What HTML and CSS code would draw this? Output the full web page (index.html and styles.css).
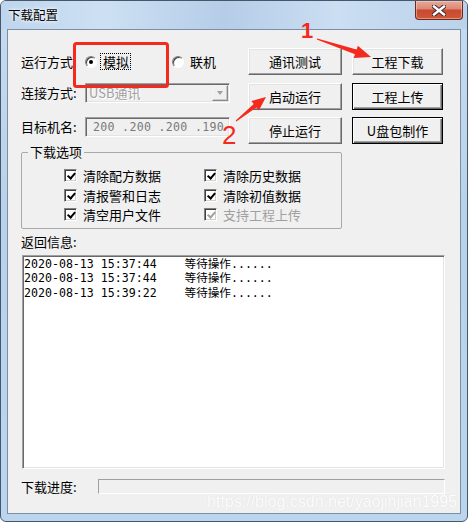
FILE: index.html
```html
<!DOCTYPE html>
<html>
<head>
    <meta charset="utf-8">
    <title>下载配置</title>
    <link rel="stylesheet" href="styles.css">
</head>
<body>
    <div class="window">
        <div class="titlebar">
            <span class="title">下载配置</span>
            <div class="close-btn">
                <svg width="14" height="11" viewBox="0 0 14 11">
                    <path d="M2 1.5 L12 9.5 M12 1.5 L2 9.5" stroke="#3b2a2a" stroke-width="4.4" stroke-linecap="square"/>
                    <path d="M2 1.5 L12 9.5 M12 1.5 L2 9.5" stroke="#fff" stroke-width="2.4" stroke-linecap="square"/>
                </svg>
            </div>
        </div>

        <div class="client">
            <div class="top">
                <div class="form">
                    <label class="lbl mid">运行方式:</label>
                    <div class="radios">
                        <span class="radio checked"></span>
                        <span class="focus">模拟</span>
                        <span class="radio second"></span>
                        <span class="radio-text">联机</span>
                    </div>

                    <label class="lbl">连接方式:</label>
                    <div class="combo">
                        <span>USB通讯</span>
                        <span class="drop"><i></i></span>
                    </div>

                    <label class="lbl">目标机名:</label>
                    <div class="ipbox">200 .200 .200 .190</div>
                </div>

                <div class="btns">
                    <button>通讯测试</button>
                    <button>工程下载</button>
                    <button>启动运行</button>
                    <button class="default">工程上传</button>
                    <button>停止运行</button>
                    <button class="default">U盘包制作</button>
                </div>
            </div>

            <fieldset class="options">
                <legend>下载选项</legend>
                <div class="checks">
                    <div class="check"><span class="box"></span>清除配方数据</div>
                    <div class="check"><span class="box"></span>清除历史数据</div>
                    <div class="check"><span class="box"></span>清报警和日志</div>
                    <div class="check"><span class="box"></span>清除初值数据</div>
                    <div class="check"><span class="box"></span>清空用户文件</div>
                    <div class="check disabled"><span class="box"></span>支持工程上传</div>
                </div>
            </fieldset>

            <div class="log-title">返回信息:</div>
            <div class="log">
                <div class="log-line">2020-08-13 15:37:44    等待操作......</div>
                <div class="log-line">2020-08-13 15:37:44    等待操作......</div>
                <div class="log-line">2020-08-13 15:39:22    等待操作......</div>
            </div>

            <div class="progress-row">
                <span class="progress-label">下载进度:</span>
                <div class="progress"></div>
            </div>

            <div class="watermark">https://blog.csdn.net/yaojinjian1995</div>
        </div>
    </div>

    <!-- red annotations drawn over the dialog -->
    <svg class="marks" width="468" height="522" viewBox="0 0 468 522">
        <rect x="74.5" y="43.5" width="93" height="43" rx="2" fill="none" stroke="#f42a1e" stroke-width="3"/>
        <text x="301" y="38" class="num one">1</text>
        <polygon points="317.2,38.5 356.6,49.5 357.9,45.7 371,57 353.7,58.1 355,54.3 316.8,39.5"/>
        <text x="222" y="144" class="num two">2</text>
        <polygon points="235.7,120.6 253.7,104.1 251.4,101.1 266,97 258.9,110.5 256.5,107.5 236.3,121.4"/>
    </svg>
</body>
</html>
```

FILE: styles.css
```css
body {
    margin: 0;
    position: relative;
    font-family: "Noto Sans CJK SC", "Liberation Sans", sans-serif;
    font-size: 13px;
    color: #000;
}

.window {
    width: 468px;
    height: 522px;
    box-sizing: border-box;
    border: 1px solid #46576a;
    border-radius: 6px;
    background: linear-gradient(180deg, #c6dbf0 0%, #b9d2eb 40%, #bcd5ee 100%);
    padding: 0 6px 7px;
    display: flex;
    flex-direction: column;
    overflow: hidden;
}

.titlebar {
    height: 28px;
    flex: none;
    display: flex;
    align-items: center;
    margin: 0 -6px;
    padding-left: 7px;
    background: linear-gradient(90deg, #bed5ed 0%, #cde0f3 22%, #b5cde8 48%, #cbdef2 72%, #bad2eb 100%);
}

.title {
    font-size: 12.5px;
    line-height: 16px;
    text-shadow: 0 0 5px #fff, 0 0 3px #fff;
}

.close-btn {
    margin-left: auto;
    margin-right: 4px;
    align-self: flex-start;
    width: 48px;
    height: 19px;
    box-sizing: border-box;
    border: 1px solid #6a2a1c;
    border-top: none;
    border-radius: 0 0 4px 4px;
    background: linear-gradient(180deg, #e9aa9a 0%, #dc8a75 42%, #c8492f 52%, #d0583b 100%);
    box-shadow: inset 0 0 0 1px rgba(255, 220, 210, 0.45);
    display: flex;
    align-items: center;
    justify-content: center;
}

.client {
    flex: 1;
    position: relative;
    background: #f0f0f0;
    border: 1px solid #7b8ea3;
    padding: 18px 0 0 13px;
}

.top {
    display: flex;
}

.form {
    display: grid;
    grid-template-columns: 64px 145px;
    grid-template-rows: 27px 27px 27px;
    row-gap: 7.5px;
}

.lbl {
    line-height: 20px;
    white-space: nowrap;
}

.lbl.mid {
    align-self: center;
}

.radios {
    display: flex;
    align-items: center;
    white-space: nowrap;
}

.radio {
    width: 12px;
    height: 12px;
    box-sizing: border-box;
    border-radius: 50%;
    border: 1px solid;
    border-color: #808080 #fff #fff #808080;
    box-shadow: inset 1px 1px 0 #404040;
    background: #fff;
    display: flex;
    align-items: center;
    justify-content: center;
}

.radio.checked::after {
    content: "";
    width: 4px;
    height: 4px;
    border-radius: 50%;
    background: #000;
}

.focus {
    margin-left: 3px;
    padding: 0 1px 0 2px;
    line-height: 15px;
    border: 1px dotted #000;
}

.radio.second {
    margin-left: 41px;
}

.radio-text {
    margin-left: 6px;
}

.combo,
.ipbox {
    height: 20px;
    box-sizing: border-box;
    align-self: start;
    border: 1px solid;
    border-color: #a0a0a0 #fff #fff #a0a0a0;
    box-shadow: inset 1px 1px 0 #696969, inset -1px -1px 0 #e3e3e3;
}

.combo {
    display: flex;
    align-items: center;
    justify-content: space-between;
    padding: 0 1px 0 3px;
    color: #a0a0a0;
    text-shadow: 1px 1px 0 #fff;
    line-height: 16px;
}

.drop {
    width: 16px;
    height: 16px;
    box-sizing: border-box;
    background: #f0f0f0;
    border: 1px solid;
    border-color: #f4f4f4 #8a8a8a #8a8a8a #f4f4f4;
    box-shadow: inset -1px -1px 0 #c8c8c8;
    display: flex;
    align-items: center;
    justify-content: center;
}

.drop i {
    width: 0;
    height: 0;
    border-left: 3.5px solid transparent;
    border-right: 3.5px solid transparent;
    border-top: 4px solid #a0a0a0;
}

.ipbox {
    padding-left: 7px;
    font-family: "DejaVu Sans Mono", monospace;
    font-size: 11.6px;
    letter-spacing: 0.3px;
    line-height: 18px;
    color: #7a7a7a;
    white-space: pre;
}

.btns {
    margin-left: 18px;
    display: grid;
    grid-template-columns: 94px 91px;
    grid-template-rows: 27px 27px 27px;
    gap: 7.5px 10px;
}

button {
    font: inherit;
    color: #000;
    padding: 0;
    background: #f0f0f0;
    border: 1px solid;
    border-color: #fff #696969 #696969 #fff;
    box-shadow: inset -1px -1px 0 #a0a0a0, inset 1px 1px 0 #e3e3e3;
}

button.default {
    border-color: #000;
    box-shadow: inset 1px 1px 0 #fff, inset -1px -1px 0 #696969, inset -2px -2px 0 #a0a0a0;
}

.options {
    margin: 1px 0 0;
    width: 321px;
    box-sizing: border-box;
    min-inline-size: 0;
    border: 1px solid #a9a9a9;
    border-radius: 2px;
    padding: 7px 6px 3px;
}

.options legend {
    padding: 0 2px;
    line-height: 14px;
}

.checks {
    margin-left: 36px;
    display: grid;
    grid-template-columns: 140px 1fr;
    grid-auto-rows: 19.5px;
}

.check {
    display: flex;
    align-items: center;
    gap: 6px;
    white-space: nowrap;
}

.box {
    width: 13px;
    height: 13px;
    box-sizing: border-box;
    flex: none;
    position: relative;
    background: #fff;
    border: 1px solid;
    border-color: #808080 #fff #fff #808080;
    box-shadow: inset 1px 1px 0 #404040, inset -1px -1px 0 #d4d0c8;
}

.box::after {
    content: "";
    position: absolute;
    left: 3.5px;
    top: 1px;
    width: 2.5px;
    height: 6px;
    border: solid #000;
    border-width: 0 2px 2px 0;
    transform: rotate(40deg);
}

.check.disabled {
    color: #a0a0a0;
}

.check.disabled .box::after {
    border-color: #a0a0a0;
}

.log-title {
    margin-top: 5px;
    line-height: 15px;
}

.log {
    margin: 6px 0 0 1px;
    width: 423px;
    height: 214px;
    box-sizing: border-box;
    background: #fff;
    border: 1px solid;
    border-color: #a0a0a0 #fff #fff #a0a0a0;
    box-shadow: inset 1px 1px 0 #696969, inset -1px -1px 0 #e3e3e3;
    padding: 1px 1px;
    font-family: "DejaVu Sans Mono", "Noto Sans CJK SC", monospace;
    font-size: 11.6px;
    line-height: 14.5px;
}

.log-line {
    height: 14.5px;
    white-space: pre;
}

.progress-row {
    display: flex;
    align-items: center;
    margin-top: 10px;
}

.progress-label {
    width: 77px;
    line-height: 15px;
}

.progress {
    width: 347px;
    height: 15px;
    box-sizing: border-box;
    border: 1px solid;
    border-color: #a0a0a0 #fff #fff #a0a0a0;
}

.watermark {
    position: absolute;
    right: 3px;
    bottom: 3.5px;
    font-family: "Liberation Sans", sans-serif;
    font-size: 16px;
    line-height: 16px;
    color: #fdfdfd;
    text-shadow: 0 0 1px #d6d6d6;
}

.marks {
    position: absolute;
    top: 0;
    left: 0;
    pointer-events: none;
}

.marks polygon {
    fill: #f42a1e;
}

.num {
    fill: #f42a1e;
    font-family: "Liberation Sans", sans-serif;
}

.num.one {
    font-size: 22px;
    font-weight: bold;
}

.num.two {
    font-size: 26px;
}
```
